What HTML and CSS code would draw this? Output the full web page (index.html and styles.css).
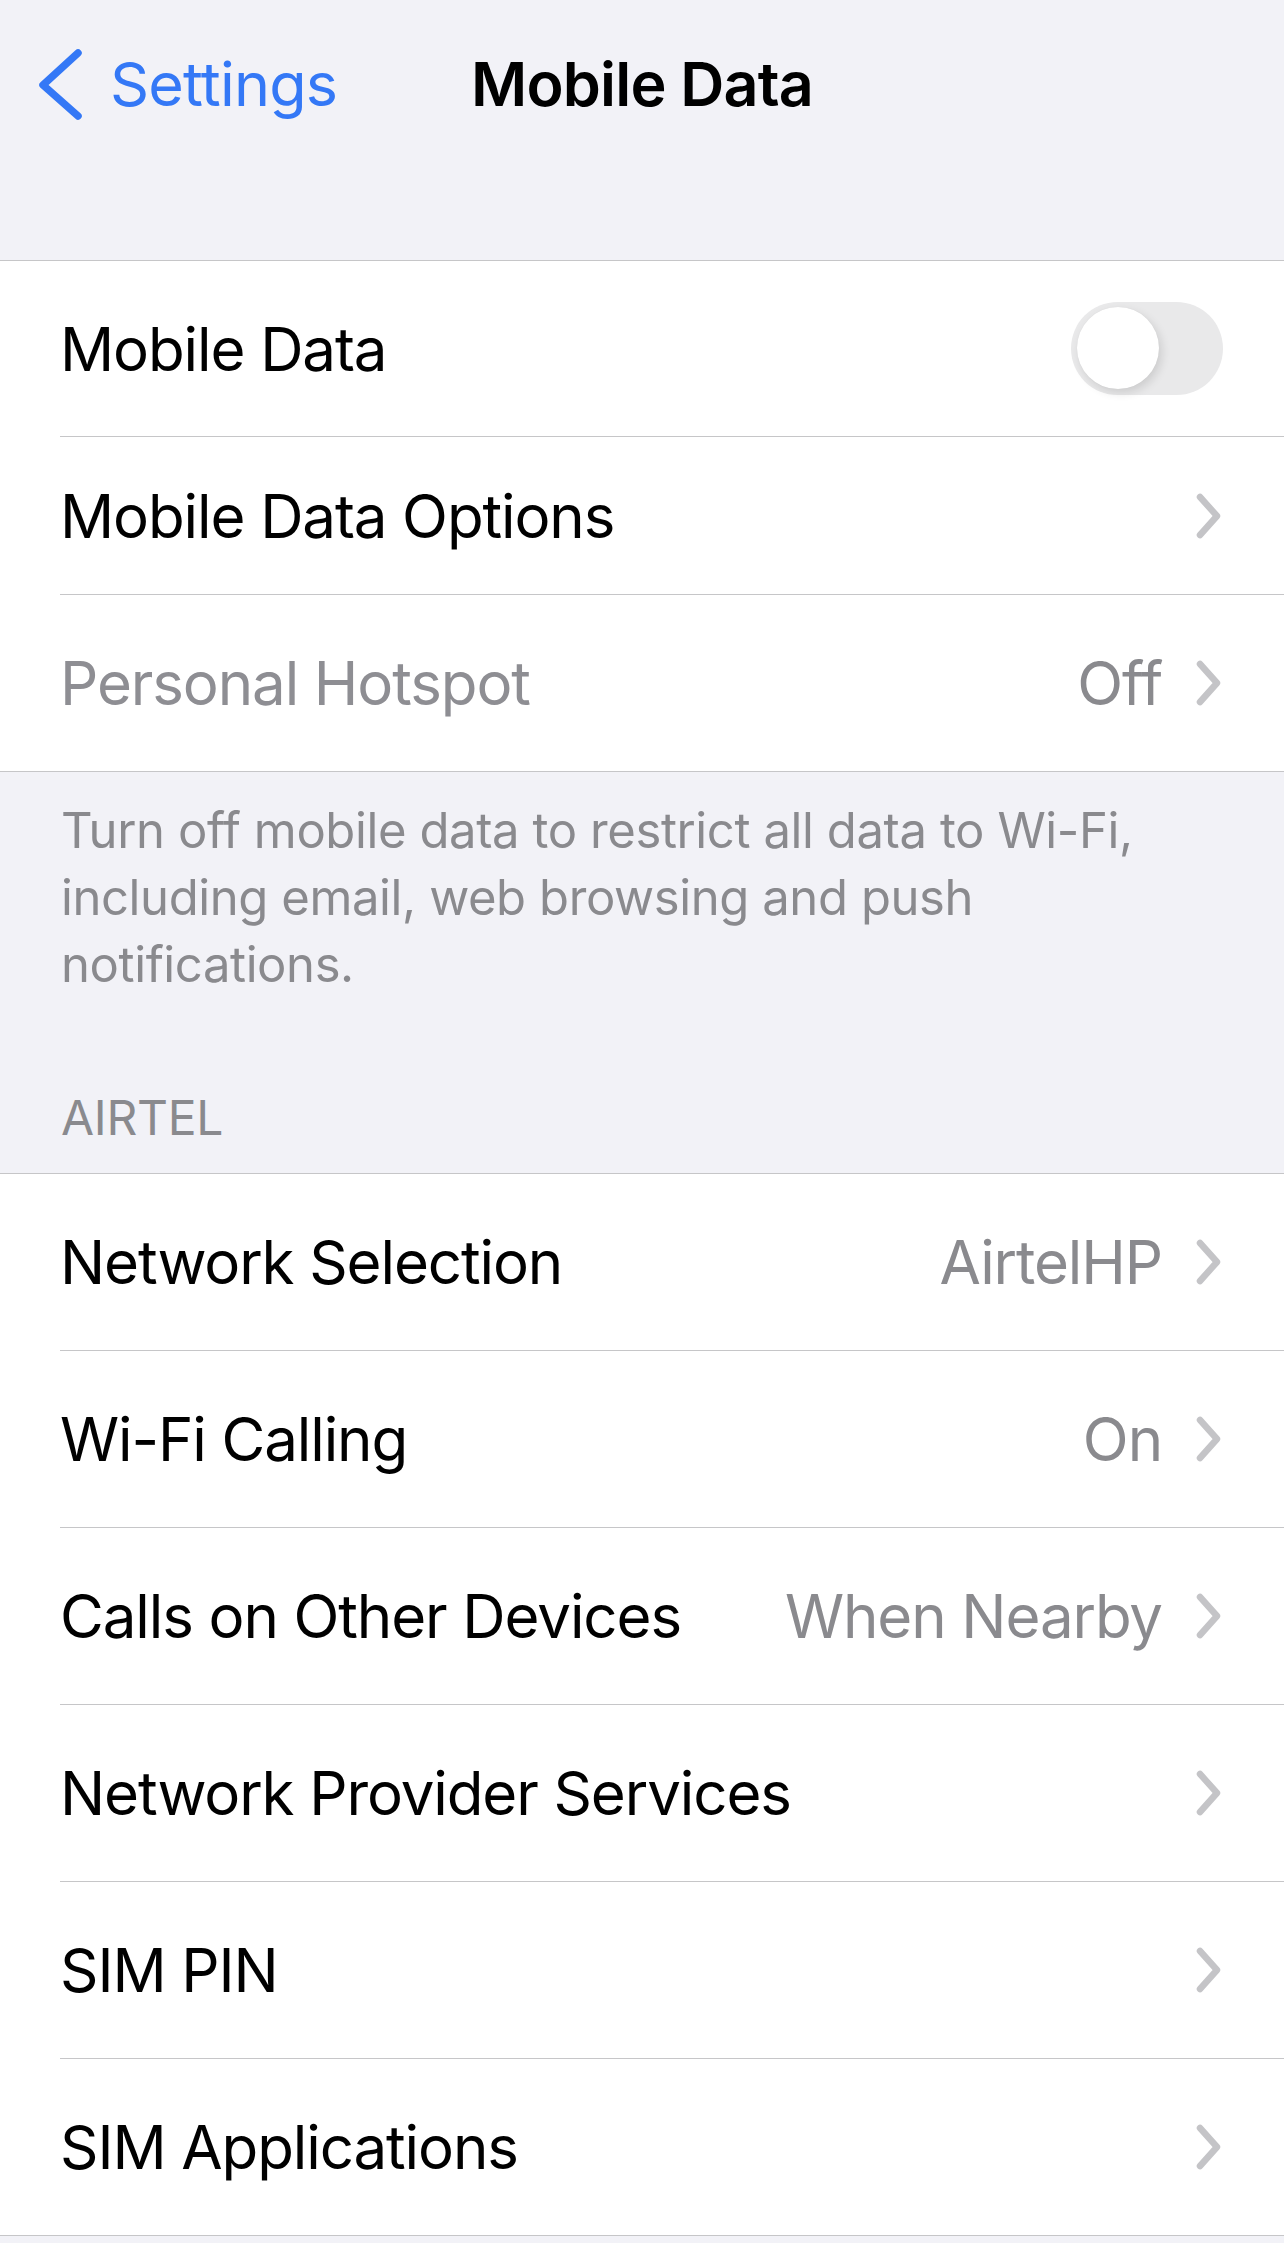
FILE: index.html
```html
<!DOCTYPE html>
<html lang="en">
<head>
<meta charset="UTF-8">
<meta name="viewport" content="width=device-width, initial-scale=1.0">
<title>Mobile Data</title>
<link rel="stylesheet" href="styles.css">
</head>
<body>
<div class="nav">
  <a class="back" href="#">
    <svg class="back-icon" width="44" height="72" viewBox="0 0 44 72">
      <path d="M40 4 L5 36 L40 67" />
    </svg>
    <span>Settings</span>
  </a>
  <h1 class="title">Mobile Data</h1>
  <div></div>
</div>

<div class="group">
  <div class="row row-tall">
    <span class="label">Mobile Data</span>
    <div class="switch"><div class="knob"></div></div>
  </div>
  <div class="row row-short">
    <span class="label">Mobile Data Options</span>
    <svg class="chevron" width="28" height="46" viewBox="0 0 28 46"><path d="M5 4 L22 23 L5 42" /></svg>
  </div>
  <div class="row row-last">
    <span class="label disabled">Personal Hotspot</span>
    <span class="value">Off</span>
    <svg class="chevron" width="28" height="46" viewBox="0 0 28 46"><path d="M5 4 L22 23 L5 42" /></svg>
  </div>
</div>

<p class="footer">Turn off mobile data to restrict all data to Wi-Fi, including email, web browsing and push notifications.</p>
<h2 class="section-header">AIRTEL</h2>

<div class="group">
  <div class="row">
    <span class="label">Network Selection</span>
    <span class="value">AirtelHP</span>
    <svg class="chevron" width="28" height="46" viewBox="0 0 28 46"><path d="M5 4 L22 23 L5 42" /></svg>
  </div>
  <div class="row">
    <span class="label">Wi-Fi Calling</span>
    <span class="value">On</span>
    <svg class="chevron" width="28" height="46" viewBox="0 0 28 46"><path d="M5 4 L22 23 L5 42" /></svg>
  </div>
  <div class="row">
    <span class="label">Calls on Other Devices</span>
    <span class="value">When Nearby</span>
    <svg class="chevron" width="28" height="46" viewBox="0 0 28 46"><path d="M5 4 L22 23 L5 42" /></svg>
  </div>
  <div class="row">
    <span class="label">Network Provider Services</span>
    <svg class="chevron" width="28" height="46" viewBox="0 0 28 46"><path d="M5 4 L22 23 L5 42" /></svg>
  </div>
  <div class="row">
    <span class="label">SIM PIN</span>
    <svg class="chevron" width="28" height="46" viewBox="0 0 28 46"><path d="M5 4 L22 23 L5 42" /></svg>
  </div>
  <div class="row row-last">
    <span class="label">SIM Applications</span>
    <svg class="chevron" width="28" height="46" viewBox="0 0 28 46"><path d="M5 4 L22 23 L5 42" /></svg>
  </div>
</div>
</body>
</html>
```

FILE: styles.css
```css
* {
  box-sizing: border-box;
}
body {
  margin: 0;
  padding: 0;
  background: #f2f2f7;
  font-family: Inter, "Liberation Sans", sans-serif;
  color: #000;
}

/* navigation bar */
.nav {
  display: grid;
  grid-template-columns: 1fr auto 1fr;
  align-items: center;
  padding: 48px 0 139px;
  height: 260px;
}
.back {
  display: flex;
  align-items: center;
  padding-left: 38px;
  color: #3478f6;
  text-decoration: none;
  font-size: 61px;
  line-height: 73px;
  letter-spacing: -0.8px;
}
.back-icon {
  margin-right: 28px;
}
.back-icon path {
  fill: none;
  stroke: #3478f6;
  stroke-width: 7.5;
  stroke-linecap: round;
  stroke-linejoin: round;
}
.title {
  margin: 0;
  font-size: 61px;
  line-height: 73px;
  font-weight: 600;
  letter-spacing: -0.8px;
}

/* grouped list */
.group {
  background: #fff;
  border-top: 1px solid #c6c6c8;
  border-bottom: 1px solid #c6c6c8;
}
.row {
  display: flex;
  align-items: center;
  height: 177px;
  margin-left: 60px;
  padding-right: 61px;
  border-bottom: 1px solid #c6c6c8;
  font-size: 60px;
  letter-spacing: -1.1px;
}
.row-tall {
  height: 176px;
}
.row-short {
  height: 158px;
}
.row-last {
  height: 176px;
  border-bottom: none;
}
.group .row-tall + .row-short + .row-last {
  height: 176px;
}
.label {
  flex: 1;
  white-space: nowrap;
}
.disabled {
  color: #8e8e93;
}
.value {
  color: #8a8a8e;
  margin-right: 33px;
  white-space: nowrap;
}
.chevron path {
  fill: none;
  stroke: #c4c4c7;
  stroke-width: 6.5;
  stroke-linecap: round;
  stroke-linejoin: round;
}

/* on/off switch */
.switch {
  width: 152px;
  height: 93px;
  border-radius: 47px;
  background: #e9e9ea;
  padding: 5px 6px;
}
.knob {
  width: 82px;
  height: 82px;
  border-radius: 50%;
  background: #fff;
  box-shadow: 3px 4px 10px rgba(0, 0, 0, 0.12), 0 0 1px rgba(0, 0, 0, 0.08);
}

/* footer and section header */
.footer {
  margin: 0;
  padding: 25px 70px 0 61px;
  font-size: 49px;
  line-height: 67px;
  color: #8a8a8e;
  letter-spacing: -0.4px;
}
.section-header {
  margin: 0;
  padding: 90px 61px 25px;
  font-size: 48px;
  line-height: 60px;
  font-weight: 400;
  color: #8a8a8e;
  letter-spacing: -0.3px;
}
```
